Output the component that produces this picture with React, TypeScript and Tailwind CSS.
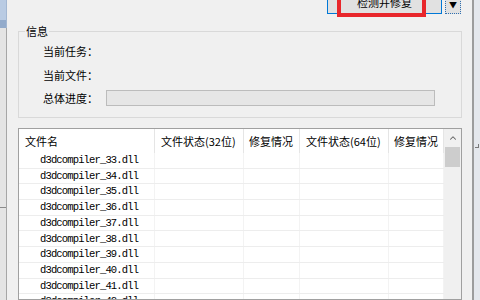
import { ChevronUp } from 'lucide-react';

const files = [33, 34, 35, 36, 37, 38, 39, 40, 41, 42, 43].map(
  (n) => `d3dcompiler_${n}.dll`
);

const columns = [
  { title: '文件名', w: 'w-[136px]' },
  { title: '文件状态(32位)', w: 'w-[89px]' },
  { title: '修复情况', w: 'w-[56px]' },
  { title: '文件状态(64位)', w: 'w-[89px]' },
  { title: '修复情况', w: 'w-[55px]' },
];

const cjk = "font-['Microsoft_YaHei','Noto_Sans_CJK_SC',sans-serif]";

export default function App() {
  return (
    <div className={`w-[480px] h-[300px] overflow-hidden flex bg-[#f0f0f0] text-black ${cjk}`}>
      {/* neighbouring window on the left */}
      <div className="w-[6px] flex flex-col bg-[#e4e4e4]">
        <div className="h-[20px] shrink-0 bg-[#b9cbe3]" />
        <div className="h-[8px] shrink-0 bg-[#93abcb]" />
        <div className="h-[179px] shrink-0" />
        <div className="h-px shrink-0 bg-[#8a8a8a]" />
      </div>
      <div className="w-px flex flex-col">
        <div className="h-[28px] shrink-0 bg-[#a3b7d2]" />
        <div className="flex-1 bg-[#a6a6a6]" />
      </div>

      <div className="flex-1 flex flex-col pl-[11px] pr-[10px] min-h-0">
        {/* toolbar buttons, cut by the top edge */}
        <div className="h-[14px] shrink-0 flex justify-end items-end gap-[3px] pr-px">
          <div className="relative w-[115px] h-[24px] shrink-0 border border-[#0078d7] bg-[#e1e1e1] flex items-center justify-center text-[11px] leading-none">
            检测并修复
            <div className="absolute left-[9px] right-[15px] top-[-4px] bottom-[-4px] border-[4px] border-[#e8262b]" />
          </div>
          <div className="w-[16px] h-[24px] shrink-0 border border-dotted border-[#2f6fb0] bg-[#e1e1e1] flex items-end justify-center pb-[4px] text-[8px] leading-none">
            ▼
          </div>
        </div>

        {/* group box */}
        <div className="relative mt-[17px] h-[87px] shrink-0 border border-[#d9d9d9] flex flex-col pl-[24px] text-[11px]">
          <div className="absolute -top-[8px] left-[6px] px-px bg-[#f0f0f0] leading-[14px]">
            信息
          </div>
          <div className="mt-[11px] h-[16px] flex items-center">当前任务：</div>
          <div className="mt-[8px] h-[16px] flex items-center">当前文件：</div>
          <div className="mt-[7px] h-[16px] flex items-center">
            <span className="w-[63px] shrink-0">总体进度：</span>
            <div className="w-[329px] h-[16px] border border-[#bcbcbc] bg-[#e6e6e6]" />
          </div>
        </div>

        {/* file list */}
        <div className="mt-[10px] flex-1 min-h-0 overflow-hidden border border-[#a0a0a0] bg-white flex">
          <div className="flex-1 flex flex-col">
            <div className="h-[24px] flex shrink-0 text-[11px]">
              {columns.map((c, i) => (
                <div
                  key={i}
                  className={`${c.w} shrink-0 flex items-center border-r border-[#e5e5e5] ${
                    i === 2 || i === 4 ? 'pl-[5px]' : 'pl-[6px]'
                  } whitespace-nowrap`}
                >
                  {c.title}
                </div>
              ))}
            </div>
            {files.map((f) => (
              <div key={f} className="h-[15.7px] flex shrink-0 border-b border-[#ededed]">
                {columns.map((c, i) => (
                  <div
                    key={i}
                    className={`${c.w} shrink-0 flex items-center border-r border-[#f3f3f3]`}
                  >
                    {i === 0 && (
                      <span className="pl-[21px] font-['Liberation_Mono',monospace] text-[10.5px] tracking-[-0.85px] leading-none">
                        {f}
                      </span>
                    )}
                  </div>
                ))}
              </div>
            ))}
          </div>
          <div className="w-[17px] shrink-0 bg-[#f0f0f0] flex flex-col items-center">
            <div className="h-[18px] flex items-center justify-center">
              <ChevronUp size={10} strokeWidth={2.5} color="#606060" />
            </div>
            <div className="w-[15px] h-[20px] bg-[#cdcdcd]" />
          </div>
        </div>
      </div>

      {/* neighbouring window on the right */}
      <div className="w-[2px] bg-[#9c9c9c]" />
      <div className="flex-1 bg-[#e4e7ec] flex flex-col">
        <div className="mt-[144px] ml-px w-[4px] h-[4px] border-r border-b border-[#7a7a7a]" />
      </div>
    </div>
  );
}
